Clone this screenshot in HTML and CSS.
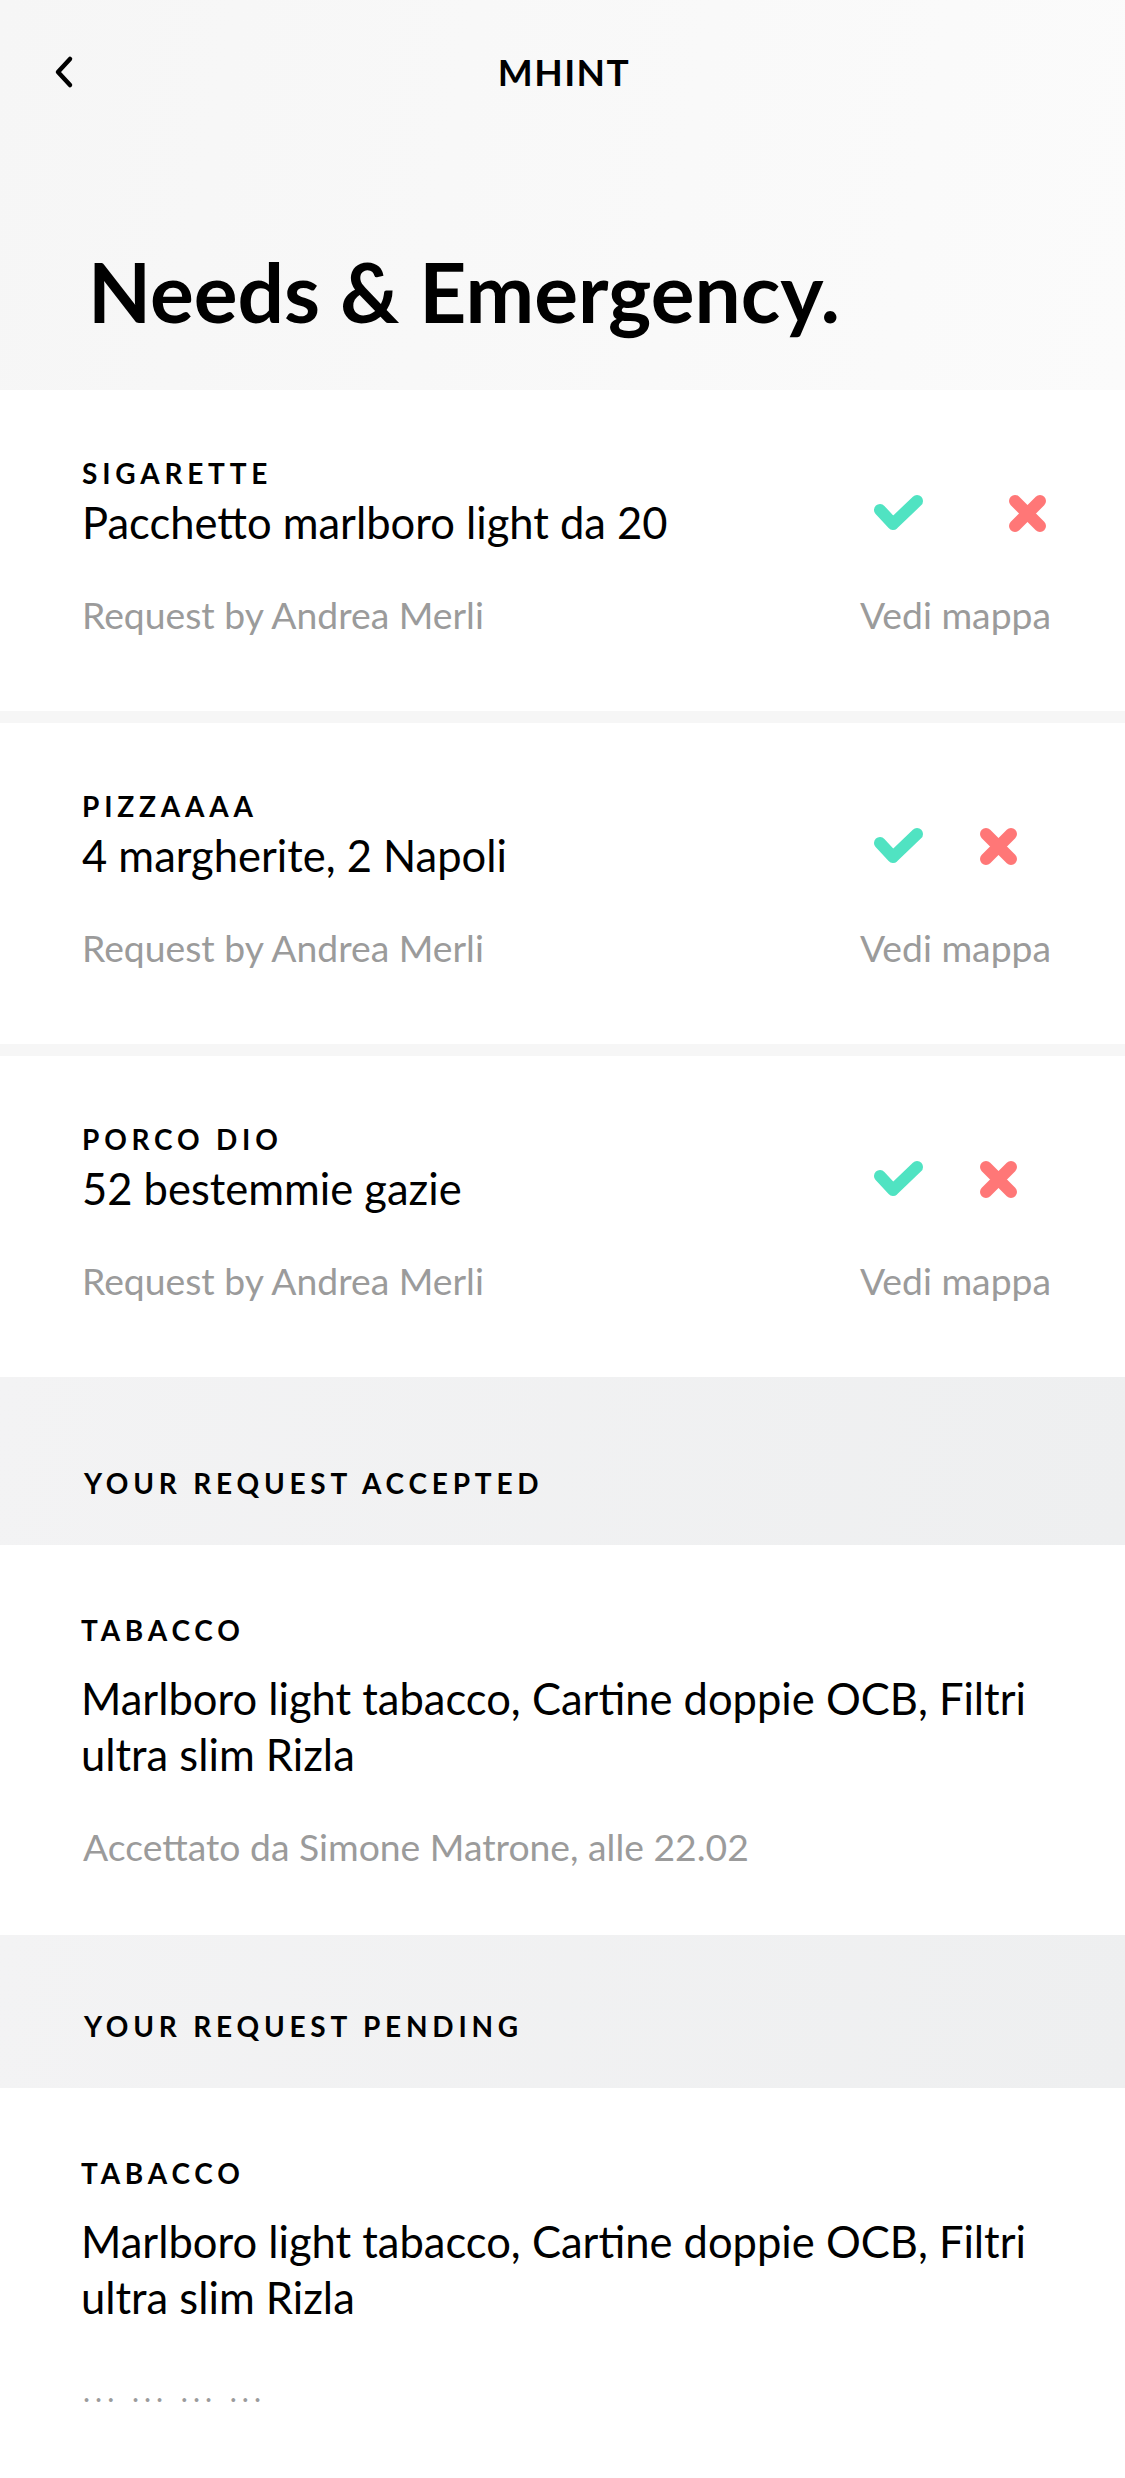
FILE: index.html
```html
<!DOCTYPE html>
<html lang="it">
<head>
<meta charset="utf-8">
<title>MHINT – Needs &amp; Emergency</title>
<link rel="stylesheet" href="styles.css">
</head>
<body>
<div class="screen">
  <header class="hero">
    <div class="topbar">
      <button class="back" aria-label="Indietro">
        <svg width="22" height="34" viewBox="0 0 22 34"><path d="M17 4 L5 17 L17 30" fill="none" stroke="#000" stroke-width="4.5" stroke-linecap="round" stroke-linejoin="round"/></svg>
      </button>
      <div class="brand">MHINT</div>
    </div>
    <h1 class="title">Needs &amp; Emergency.</h1>
  </header>

  <section class="needs">
    <article class="need">
      <div class="need__top">
        <div class="need__text">
          <div class="label">SIGARETTE</div>
          <div class="desc">Pacchetto marlboro light da 20</div>
        </div>
        <div class="actions actions--wide">
          <svg class="ico ico--ok" width="49" height="36" viewBox="0 0 49 36"><path d="M6 15 L19 29 L43 6" fill="none" stroke="#50E3C2" stroke-width="12" stroke-linecap="round" stroke-linejoin="round"/></svg>
          <svg class="ico ico--no" width="37" height="37" viewBox="0 0 37 37"><path d="M6 6 L31 31 M31 6 L6 31" fill="none" stroke="#FF7777" stroke-width="12" stroke-linecap="round"/></svg>
        </div>
      </div>
      <div class="need__bottom">
        <span class="meta">Request by Andrea Merli</span>
        <a class="meta link">Vedi mappa</a>
      </div>
    </article>

    <article class="need">
      <div class="need__top">
        <div class="need__text">
          <div class="label">PIZZAAAA</div>
          <div class="desc">4 margherite, 2 Napoli</div>
        </div>
        <div class="actions">
          <svg class="ico ico--ok" width="49" height="36" viewBox="0 0 49 36"><path d="M6 15 L19 29 L43 6" fill="none" stroke="#50E3C2" stroke-width="12" stroke-linecap="round" stroke-linejoin="round"/></svg>
          <svg class="ico ico--no" width="37" height="37" viewBox="0 0 37 37"><path d="M6 6 L31 31 M31 6 L6 31" fill="none" stroke="#FF7777" stroke-width="12" stroke-linecap="round"/></svg>
        </div>
      </div>
      <div class="need__bottom">
        <span class="meta">Request by Andrea Merli</span>
        <a class="meta link">Vedi mappa</a>
      </div>
    </article>

    <article class="need">
      <div class="need__top">
        <div class="need__text">
          <div class="label">PORCO DIO</div>
          <div class="desc">52 bestemmie gazie</div>
        </div>
        <div class="actions">
          <svg class="ico ico--ok" width="49" height="36" viewBox="0 0 49 36"><path d="M6 15 L19 29 L43 6" fill="none" stroke="#50E3C2" stroke-width="12" stroke-linecap="round" stroke-linejoin="round"/></svg>
          <svg class="ico ico--no" width="37" height="37" viewBox="0 0 37 37"><path d="M6 6 L31 31 M31 6 L6 31" fill="none" stroke="#FF7777" stroke-width="12" stroke-linecap="round"/></svg>
        </div>
      </div>
      <div class="need__bottom">
        <span class="meta">Request by Andrea Merli</span>
        <a class="meta link">Vedi mappa</a>
      </div>
    </article>
  </section>

  <div class="section-head section-head--first">
    <h2 class="label">YOUR REQUEST ACCEPTED</h2>
  </div>
  <article class="request">
    <div class="label">TABACCO</div>
    <p class="desc desc--multi">Marlboro light tabacco, Cartine doppie OCB, Filtri ultra slim Rizla</p>
    <p class="meta">Accettato da Simone Matrone, alle 22.02</p>
  </article>

  <div class="section-head">
    <h2 class="label">YOUR REQUEST PENDING</h2>
  </div>
  <article class="request">
    <div class="label">TABACCO</div>
    <p class="desc desc--multi">Marlboro light tabacco, Cartine doppie OCB, Filtri ultra slim Rizla</p>
    <p class="meta dots">... ... ... ...</p>
  </article>
</div>
</body>
</html>
```

FILE: styles.css
```css
* { box-sizing: border-box; }
html, body { margin: 0; padding: 0; }
body {
  background: #fff;
  color: #000;
  font-family: Lato, "Noto Sans", sans-serif;
  -webkit-font-smoothing: antialiased;
}
.screen { width: 1125px; overflow: hidden; }

.hero {
  height: 390px;
  background: linear-gradient(100deg, #f6f6f6 0%, #fbfbfb 100%);
}
.topbar {
  position: relative;
  height: 144px;
  display: flex;
  align-items: center;
  justify-content: center;
}
.back {
  position: absolute;
  left: 53px;
  top: 55px;
  border: 0;
  padding: 0;
  background: none;
  line-height: 0;
}
.brand {
  padding-left: 3px;
  font-size: 37px;
  line-height: 38px;
  font-weight: 700;
  letter-spacing: 1.5px;
}
.title {
  margin: 107px 0 0;
  padding-left: 88px;
  font-size: 82px;
  line-height: 80px;
  font-weight: 700;
}

.needs {
  display: flex;
  flex-direction: column;
  gap: 12px;
  background: #f6f6f6;
}
.need {
  height: 321px;
  background: #fff;
  padding: 69px 74px 0 82px;
}
.label {
  margin: 0;
  font-size: 28px;
  line-height: 28px;
  font-weight: 700;
  letter-spacing: 4.8px;
}
.desc {
  margin: 15px 0 0;
  font-size: 43.5px;
  line-height: 41px;
}
.need__top {
  display: flex;
  justify-content: space-between;
}
.actions {
  display: flex;
  align-items: center;
  gap: 57px;
  width: 177px;
  margin-top: 24px;
}
.actions--wide { gap: 86px; }
.ico { display: block; flex: none; }
.need__bottom {
  display: flex;
  justify-content: space-between;
  margin-top: 55px;
}
.meta {
  margin: 0;
  font-size: 37.3px;
  line-height: 34px;
  color: #9b9b9b;
}
.link { text-decoration: none; }

.section-head {
  height: 153px;
  padding: 77px 0 0 84px;
  background: linear-gradient(100deg, #f3f3f4 0%, #eeeff0 100%);
}
.section-head--first {
  height: 168px;
  padding-top: 92px;
}

.request {
  height: 390px;
  padding: 71px 74px 0 81px;
  background: #fff;
}
.desc--multi {
  margin-top: 26px;
  line-height: 56px;
}
.request .meta { margin-top: 48px; padding-left: 2px; }
.dots { letter-spacing: 5px; font-size: 30px; }
```
